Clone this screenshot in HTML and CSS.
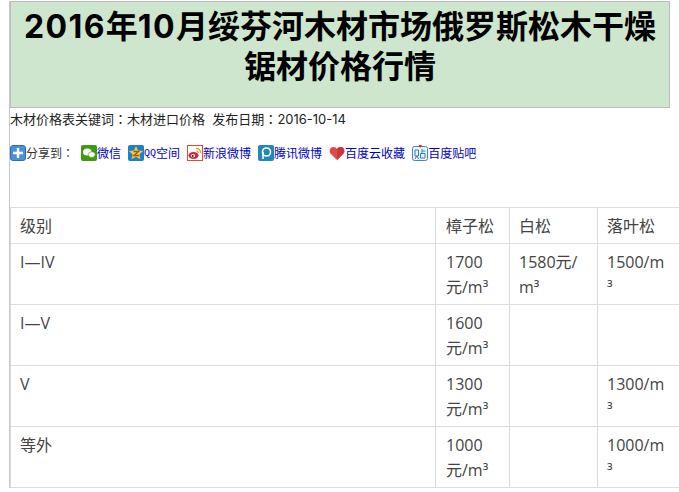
FILE: index.html
```html
<!DOCTYPE html>
<html lang="zh">
<head>
<meta charset="utf-8">
<title>2016年10月绥芬河木材市场俄罗斯松木干燥锯材价格行情</title>
<link rel="stylesheet" href="styles.css">
</head>
<body>
<div class="page">
  <h1 class="title"><span class="num">2016</span>年<span class="num">10</span>月绥芬河木材市场俄罗斯松木干燥锯材价格行情</h1>
  <p class="meta">木材价格表关键词<span class="colon" lang="zh-Hant">：</span>木材进口价格&nbsp; 发布日期<span class="colon" lang="zh-Hant">：</span>2016-10-14</p>
  <div class="share">
    <svg class="ico" viewBox="0 0 16 16"><rect x=".5" y=".5" width="15" height="15" rx="2.5" fill="#4a90dc" stroke="#2f6db5"/><path d="M3 8h10M8 3v10" stroke="#fff" stroke-width="2.400"/></svg>
    <span class="share-label">分享到<span class="colon" lang="zh-Hant">：</span></span>
    <a class="share-link" href="#"><svg class="ico" viewBox="0 0 16 16"><rect width="16" height="16" rx="2" fill="#3f9a12"/><ellipse cx="6.300" cy="7" rx="4.300" ry="3.500" fill="#fff"/><ellipse cx="10.700" cy="9.600" rx="3.500" ry="2.800" fill="#fff" stroke="#3f9a12" stroke-width=".6"/></svg>微信</a>
    <a class="share-link" href="#"><svg class="ico" viewBox="0 0 16 16"><rect width="16" height="16" rx="2" fill="#1c7fd0"/><path d="M8 1l2.100 4.600 5 .5-3.700 3.300 1 4.900L8 11.800l-4.400 2.500 1-4.900L.9 6.100l5-.5z" fill="#fcc82e"/><path d="M5.500 6.500h5l-4.500 4h4.800" fill="none" stroke="#a5560c" stroke-width="1.300"/></svg><span class="latin">QQ</span>空间</a>
    <a class="share-link" href="#"><svg class="ico" viewBox="0 0 16 16"><rect x=".5" y=".5" width="15" height="15" fill="#fff" stroke="#d8502a"/><ellipse cx="6.500" cy="10.500" rx="5" ry="3.500" fill="#d8232a"/><ellipse cx="6" cy="10.800" rx="2.200" ry="1.800" fill="#fff"/><circle cx="5.700" cy="11" r="1" fill="#222"/><path d="M9 3.500a4 4 0 0 1 4.500 4.500M9.500 6a1.800 1.800 0 0 1 1.800 2" fill="none" stroke="#f19a1c" stroke-width="1.300"/></svg>新浪微博</a>
    <a class="share-link" href="#"><svg class="ico" viewBox="0 0 16 16"><rect width="16" height="16" rx="2" fill="#2388b8"/><circle cx="8.500" cy="7" r="4" fill="none" stroke="#fff" stroke-width="1.600"/><path d="M5 14V7" stroke="#fff" stroke-width="1.600"/></svg>腾讯微博</a>
    <a class="share-link" href="#"><svg class="ico" viewBox="0 0 16 16"><path d="M8 15L1.500 8.500C-.5 6 1 2 4.500 2 6 2 7.200 2.800 8 4c.8-1.200 2-2 3.500-2C15 2 16.500 6 14.500 8.500z" fill="#e2474a"/><path d="M8 4v11l6.500-6.500C16.500 6 15 2 11.500 2 10 2 8.800 2.800 8 4z" fill="#c9353b"/></svg>百度云收藏</a>
    <a class="share-link" href="#"><svg class="ico" viewBox="0 0 16 16"><rect x=".5" y="1.500" width="15" height="14" rx="2" fill="#eef6fd" stroke="#3c86cc"/><path d="M6.500 0h3.500L8.200 3z" fill="#e0262a"/><path d="M3 5h3.500v6H3zM4.800 11l-1.800 3M5 11l1.500 3M10 4v4M10 6h3.500M8.500 8.500h4.500v4.500h-4.500z" fill="none" stroke="#2f7cc6"/></svg>百度贴吧</a>
  </div>
  <table class="prices">
    <colgroup><col class="col-grade"><col class="col-a"><col class="col-b"><col class="col-c"></colgroup>
    <tr><td>级别</td><td>樟子松</td><td>白松</td><td>落叶松</td></tr>
    <tr><td>I—IV</td><td>1700<br>元/m³</td><td>1580元/<br>m³</td><td>1500/m<br>³</td></tr>
    <tr><td>I—V</td><td>1600<br>元/m³</td><td></td><td></td></tr>
    <tr><td>V</td><td>1300<br>元/m³</td><td></td><td>1300/m<br>³</td></tr>
    <tr><td>等外</td><td>1000<br>元/m³</td><td></td><td>1000/m<br>³</td></tr>
  </table>
</div>
</body>
</html>
```

FILE: styles.css
```css
html, body {
  margin: 0;
  padding: 0;
  background: #fff;
  overflow: hidden;
}
.page {
  width: 660px;
  margin-left: 9px;
  border-left: 1px solid #c8c8c8;
  font-family: "Open Sans", "Noto Sans CJK SC", sans-serif;
}
.title {
  margin: 1px 0 0;
  box-sizing: border-box;
  width: 660px;
  height: 107px;
  padding: 5px 10px 0;
  border: 1px solid #bbb;
  background: #cde6cd;
  color: #000;
  text-align: center;
  font-family: "Inter", "Noto Sans CJK SC", sans-serif;
  font-size: 32px;
  font-weight: 700;
  line-height: 40px;
}
.num {
  letter-spacing: 1.4px;
}
.meta {
  margin: 0;
  height: 24px;
  font-family: "Inter", "Noto Sans CJK SC", sans-serif;
  font-size: 13px;
  line-height: 21px;
  color: #222;
}
.colon {
  font-family: "Noto Sans CJK TC", sans-serif;
}
.share {
  display: flex;
  align-items: center;
  height: 16px;
  margin-top: 13px;
  font-size: 12px;
  white-space: nowrap;
}
.ico {
  width: 16px;
  height: 16px;
  flex: none;
}
.share-label {
  color: #333;
  margin-right: 7px;
}
.share-link {
  display: flex;
  align-items: center;
  color: #0000cc;
  text-decoration: none;
  margin-right: 7px;
}
.latin {
  font-family: "Liberation Mono", monospace;
  font-size: 10px;
}
.prices {
  margin-top: 46px;
  width: 680px;
  table-layout: fixed;
  border-collapse: collapse;
  font-size: 16px;
  line-height: 25px;
  color: #444;
}
.prices td {
  border: 1px solid #ddd;
  padding: 6px 11px 4px 9px;
  vertical-align: top;
}
.prices td:nth-child(2) {
  padding-left: 10px;
  padding-right: 10px;
}
.col-grade { width: 425px; }
.col-a { width: 74px; }
.col-b { width: 88px; }
.col-c { width: 93px; }
```
